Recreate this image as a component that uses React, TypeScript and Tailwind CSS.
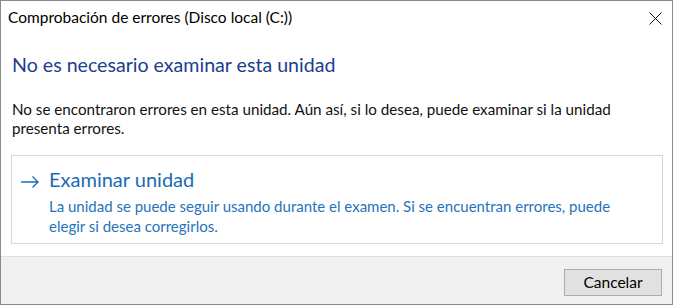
export default function App() {
  return (
    <div className="w-[673px] h-[305px] border border-[#8a8a8a] bg-white flex flex-col font-['Lato',sans-serif] text-black overflow-hidden">
      <div className="h-[34px] shrink-0 flex items-center justify-between pl-[7px] pr-[10px]">
        <span className="text-[15.5px] leading-none text-[#000]">Comprobación de errores (Disco local (C:))</span>
        <svg width="13" height="13" viewBox="0 0 13 13" className="shrink-0">
          <path d="M0.5 0.5 L12.5 12.5 M12.5 0.5 L0.5 12.5" stroke="#111" strokeWidth="1" fill="none" />
        </svg>
      </div>
      <div className="flex-1 flex flex-col pl-[10px] pr-[9px]">
        <h1 className="mt-[16px] pl-[1px] text-[19.6px] leading-[28px] text-[#1c3d91] whitespace-nowrap">
          No es necesario examinar esta unidad
        </h1>
        <p className="mt-[21px] pl-[1px] text-[15.2px] leading-[19px] text-[#111] whitespace-nowrap">
          No se encontraron errores en esta unidad. Aún así, si lo desea, puede examinar si la unidad
          <br />
          presenta errores.
        </p>
        <div className="mt-[17px] h-[89px] border border-[#c9dbe8] flex pl-[9px] pt-[10px]">
          <div className="w-[28px] shrink-0">
            <svg width="18" height="12" viewBox="0 0 18 12" className="mt-[10px]">
              <path d="M0 6 H17 M11.5 0.5 L17 6 L11.5 11.5" stroke="#1c6cb8" strokeWidth="1.3" fill="none" />
            </svg>
          </div>
          <div className="flex flex-col">
            <div className="text-[20px] leading-[26px] text-[#1a6bb6] whitespace-nowrap">Examinar unidad</div>
            <div className="mt-[4px] text-[15px] leading-[20px] text-[#2674bb] whitespace-nowrap">
              La unidad se puede seguir usando durante el examen. Si se encuentran errores, puede
              <br />
              elegir si desea corregirlos.
            </div>
          </div>
        </div>
      </div>
      <div className="h-[48px] shrink-0 bg-[#f0f0f0] border-t border-[#dfdfdf] flex justify-end items-start pt-[12px] pr-[10px]">
        <button className="w-[98px] h-[27px] border border-[#adadad] bg-[#e1e1e1] text-[15.5px] leading-none text-black flex items-center justify-center">
          Cancelar
        </button>
      </div>
    </div>
  );
}
